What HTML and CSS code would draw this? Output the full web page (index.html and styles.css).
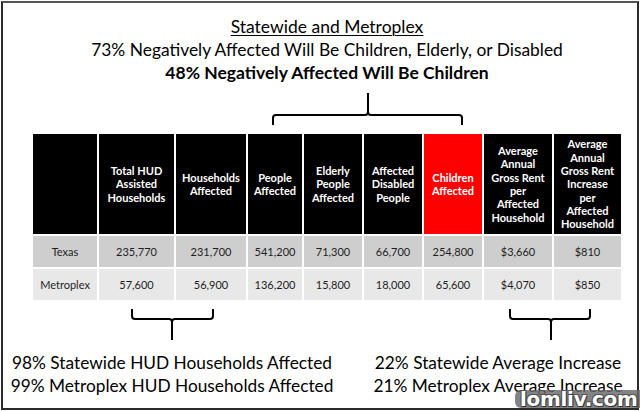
FILE: index.html
```html
<!DOCTYPE html>
<html>
<head>
<meta charset="utf-8">
<link rel="stylesheet" href="styles.css">
</head>
<body>
<div class="frame">
  <div class="content">
    <div class="titles">
      <div class="t1"><span class="ul">Statewide and Metroplex</span></div>
      <div class="t2">73% Negatively Affected Will Be Children, Elderly, or Disabled</div>
      <div class="t3">48% Negatively Affected Will Be Children</div>
    </div>
    <svg class="brace-top" width="588" height="44" viewBox="0 0 588 44">
      <path d="M240 35 L240 28 Q240 25 243 25 L332 25 Q335 25 335 22 L335 3 M335 22 Q335 25 338 25 L426 25 Q429 25 429 28 L429 35" fill="none" stroke="#000" stroke-width="2"/>
    </svg>
    <div class="table">
      <div class="cell head"></div>
      <div class="cell head">Total HUD Assisted Households</div>
      <div class="cell head">Households Affected</div>
      <div class="cell head">People Affected</div>
      <div class="cell head">Elderly People Affected</div>
      <div class="cell head">Affected Disabled People</div>
      <div class="cell head red">Children Affected</div>
      <div class="cell head">Average Annual Gross Rent per Affected Household</div>
      <div class="cell head">Average Annual Gross Rent Increase per Affected Household</div>

      <div class="cell r1">Texas</div>
      <div class="cell r1">235,770</div>
      <div class="cell r1">231,700</div>
      <div class="cell r1">541,200</div>
      <div class="cell r1">71,300</div>
      <div class="cell r1">66,700</div>
      <div class="cell r1">254,800</div>
      <div class="cell r1">$3,660</div>
      <div class="cell r1">$810</div>

      <div class="cell r2">Metroplex</div>
      <div class="cell r2">57,600</div>
      <div class="cell r2">56,900</div>
      <div class="cell r2">136,200</div>
      <div class="cell r2">15,800</div>
      <div class="cell r2">18,000</div>
      <div class="cell r2">65,600</div>
      <div class="cell r2">$4,070</div>
      <div class="cell r2">$850</div>
    </div>
  </div>
  <svg class="brace-bottom" width="634" height="44" viewBox="0 0 634 44">
    <path d="M129 9 L129 16 Q129 19 132 19 L166 19 Q169 19 169 22 L169 40 M169 22 Q169 19 172 19 L207 19 Q210 19 210 16 L210 9" fill="none" stroke="#000" stroke-width="2"/>
    <path d="M507 9 L507 16 Q507 19 510 19 L545 19 Q548 19 548 22 L548 40 M548 22 Q548 19 551 19 L584 19 Q587 19 587 16 L587 9" fill="none" stroke="#000" stroke-width="2"/>
  </svg>
  <div class="bottom">
    <div class="bl">
      <div>98% Statewide HUD Households Affected</div>
      <div>99% Metroplex HUD Households Affected</div>
    </div>
    <div class="br">
      <div>22% Statewide Average Increase</div>
      <div>21% Metroplex Average Increase</div>
    </div>
  </div>
</div>
<div class="watermark">lomliv.com</div>
</body>
</html>
```
FILE: styles.css
```css
html, body {
  margin: 0;
  padding: 0;
  background: #fff;
}
body {
  font-family: "Lato", "Liberation Sans", sans-serif;
  color: #000;
  position: relative;
  width: 640px;
  height: 411px;
  overflow: hidden;
}
.frame {
  margin: 1px 0 0 1px;
  width: 638px;
  height: 409px;
  box-sizing: border-box;
  border: 2px solid #2b2b2b;
  border-top-color: #555;
  background: #fff;
}
.content {
  padding-left: 30px;
  width: 588px;
}
.titles {
  padding-top: 12px;
  text-align: center;
  font-size: 17.5px;
  line-height: 23px;
}
.ul {
  text-decoration: underline;
  text-decoration-thickness: 1px;
  text-underline-offset: 2px;
}
.t2 {
  font-size: 17.4px;
}
.t3 {
  font-weight: 700;
}
.brace-top {
  display: block;
  margin-top: 6px;
}
.table {
  display: grid;
  grid-template-columns: 64px 75px 70px 54px 58px 58px 58px 68px 67px;
  grid-template-rows: 100px 31px 31px;
  column-gap: 2px;
  row-gap: 2px;
}
.cell {
  display: flex;
  align-items: center;
  justify-content: center;
  text-align: center;
  font-size: 11px;
  line-height: 13.3px;
  color: #1e1e1e;
}
.head {
  background: #000;
  color: #fff;
  font-weight: 700;
  padding: 0 4px;
}
.head.red {
  background: #ff0000;
}
.r1 {
  background: #cecece;
}
.r2 {
  background: #e8e8e8;
}
.brace-bottom {
  display: block;
}
.bottom {
  display: flex;
  font-size: 17.3px;
  line-height: 23px;
  margin-top: 7px;
  white-space: nowrap;
}
.bl {
  width: 338px;
  text-align: center;
}
.br {
  margin-left: 32px;
  width: 250px;
  display: flex;
  flex-direction: column;
  align-items: center;
}
.watermark {
  position: absolute;
  left: 515px;
  top: 390px;
  width: 130px;
  height: 18px;
  border-radius: 6px 0 0 6px;
  background: rgba(105, 105, 105, 0.82);
  color: #fff;
  font-family: "DejaVu Sans", sans-serif;
  font-weight: 700;
  font-size: 20px;
  line-height: 18px;
  padding-left: 5px;
  box-sizing: border-box;
  letter-spacing: -0.3px;
  text-shadow: 1px 1px 0 #333, -1px -1px 0 #555, 1px -1px 0 #555, -1px 1px 0 #555;
}
```
